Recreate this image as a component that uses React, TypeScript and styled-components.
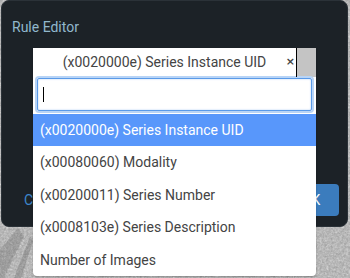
import React from "react";
import styled, { createGlobalStyle } from "styled-components";

const Global = createGlobalStyle`
  html, body { margin: 0; padding: 0; }
  body {
    width: 350px;
    height: 278px;
    overflow: hidden;
    background: #9c9c9c;
    font-family: Roboto, "Liberation Sans", Arial, sans-serif;
  }
`;

const Stage = styled.div`
  position: relative;
  width: 350px;
  height: 278px;
  overflow: hidden;
`;

const Texture = styled.svg`
  position: absolute;
  inset: 0;
  width: 350px;
  height: 278px;
`;

const Modal = styled.div`
  position: relative;
  margin-left: 1px;
  width: 347px;
  height: 227px;
  box-sizing: border-box;
  background: #1c2227;
  border: 1px solid #2b3238;
  border-radius: 8px;
  display: flex;
  flex-direction: column;
  padding: 18px 8px 0 10px;
`;

const Title = styled.div`
  font-size: 14px;
  color: #91b8cd;
  line-height: 16px;
`;

const Body = styled.div`
  flex: 1;
`;

const Footer = styled.div`
  display: flex;
  justify-content: space-between;
  align-items: center;
  padding: 0 0 10px 12px;
`;

const CancelLink = styled.span`
  font-size: 14px;
  color: #3c87cb;
`;

const OkButton = styled.div`
  width: 56px;
  height: 32px;
  border-radius: 4px;
  background: #3b7cbd;
  color: #ffffff;
  font-size: 14px;
  display: flex;
  align-items: center;
  justify-content: center;
`;

const Dropdown = styled.div`
  position: absolute;
  left: 33px;
  top: 48px;
  width: 283px;
  height: 228px;
  background: #ffffff;
  border-radius: 0 0 4px 4px;
  box-shadow: 0 1px 2px rgba(0, 0, 0, 0.25);
  display: flex;
  flex-direction: column;
`;

const Header = styled.div`
  display: flex;
  height: 30px;
`;

const HeaderText = styled.div`
  flex: 1;
  display: flex;
  align-items: center;
  justify-content: center;
  font-size: 14px;
  color: #444;
  border-right: 1px solid #000;
  position: relative;
`;

const Clear = styled.span`
  position: absolute;
  right: 1px;
  top: 8px;
  font-size: 11px;
  line-height: 12px;
  font-weight: bold;
  color: #444;
  font-family: "DejaVu Sans", sans-serif;
`;

const ArrowBox = styled.div`
  width: 19px;
  background: #c4c4c4;
`;

const SearchWrap = styled.div`
  padding: 1px 4px 3px 4px;
`;

const Search = styled.div`
  height: 33px;
  box-sizing: border-box;
  border: 1px solid #5a9ae8;
  box-shadow: 0 0 0 2px #b8d4f6, inset 0 0 2px #a9c9f2;
  border-radius: 2px;
  display: flex;
  align-items: center;
  padding-left: 5px;
`;

const Caret = styled.span`
  width: 1px;
  height: 15px;
  background: #000;
`;

const List = styled.div`
  display: flex;
  flex-direction: column;
`;

const Item = styled.div<{ $active?: boolean }>`
  height: 32.5px;
  display: flex;
  align-items: center;
  padding-left: 7px;
  font-size: 14px;
  color: ${(p) => (p.$active ? "#ffffff" : "#444444")};
  background: ${(p) => (p.$active ? "#5897fb" : "transparent")};
`;

const items = [
  "(x0020000e) Series Instance UID",
  "(x00080060) Modality",
  "(x00200011) Series Number",
  "(x0008103e) Series Description",
  "Number of Images",
];

export default function App() {
  return (
    <Stage>
      <Global />
      <Texture viewBox="0 0 350 278" preserveAspectRatio="none">
        <filter id="n">
          <feTurbulence type="fractalNoise" baseFrequency="0.45" numOctaves="3" seed="4" />
          <feColorMatrix type="saturate" values="0" />
          <feComponentTransfer>
            <feFuncR type="linear" slope="0.6" intercept="0.35" />
            <feFuncG type="linear" slope="0.6" intercept="0.35" />
            <feFuncB type="linear" slope="0.6" intercept="0.35" />
          </feComponentTransfer>
        </filter>
        <rect width="350" height="278" filter="url(#n)" />
        <path d="M0 250 L18 228 L24 236 L4 278 L0 278 Z" fill="#444" opacity="0.22" />
        <path d="M14 278 L30 236 L33 241 L21 278 Z" fill="#333" opacity="0.2" />
      </Texture>
      <Modal>
        <Title>Rule Editor</Title>
        <Body />
        <Footer>
          <CancelLink>Cancel</CancelLink>
          <OkButton>OK</OkButton>
        </Footer>
      </Modal>
      <Dropdown>
        <Header>
          <HeaderText>
            (x0020000e) Series Instance UID
            <Clear>×</Clear>
          </HeaderText>
          <ArrowBox />
        </Header>
        <SearchWrap>
          <Search>
            <Caret />
          </Search>
        </SearchWrap>
        <List>
          {items.map((t, i) => (
            <Item key={t} $active={i === 0}>
              {t}
            </Item>
          ))}
        </List>
      </Dropdown>
    </Stage>
  );
}
